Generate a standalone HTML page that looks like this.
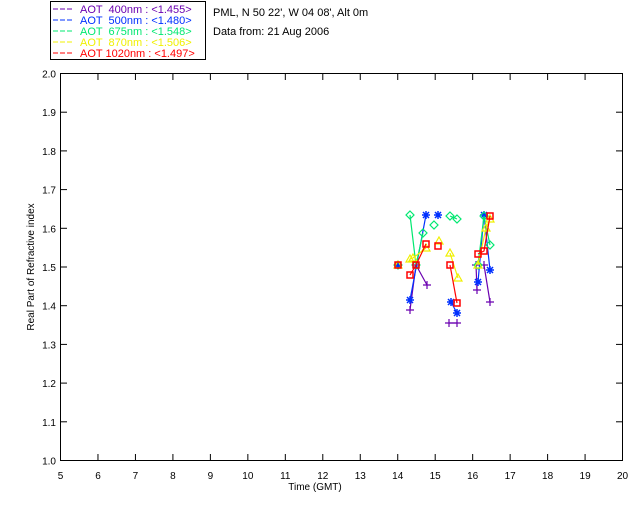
<!DOCTYPE html>
<html><head><meta charset="utf-8"><style>
html,body{margin:0;padding:0;background:#fff;width:640px;height:512px;overflow:hidden}
svg text{font-family:"Liberation Sans",sans-serif;font-size:10px}
</style></head><body>
<svg id="s" width="640" height="512" xmlns="http://www.w3.org/2000/svg">
<rect x="50.5" y="1.5" width="155" height="58" fill="#fff" stroke="#000"/>
<g style="font-size:11px">
<line x1="53" y1="9" x2="74" y2="9" stroke="#6a00b0" stroke-dasharray="5,2"/>
<text x="80" y="13" fill="#6a00b0" xml:space="preserve" style="font-size:11px">AOT  400nm : &lt;1.455&gt;</text>
<line x1="53" y1="20" x2="74" y2="20" stroke="#0030ff" stroke-dasharray="5,2"/>
<text x="80" y="24" fill="#0030ff" xml:space="preserve" style="font-size:11px">AOT  500nm : &lt;1.480&gt;</text>
<line x1="53" y1="31" x2="74" y2="31" stroke="#00e870" stroke-dasharray="5,2"/>
<text x="80" y="35" fill="#00e870" xml:space="preserve" style="font-size:11px">AOT  675nm : &lt;1.548&gt;</text>
<line x1="53" y1="42" x2="74" y2="42" stroke="#f0f000" stroke-dasharray="5,2"/>
<text x="80" y="46" fill="#f0f000" xml:space="preserve" style="font-size:11px">AOT  870nm : &lt;1.506&gt;</text>
<line x1="53" y1="53" x2="74" y2="53" stroke="#ff0000" stroke-dasharray="5,2"/>
<text x="80" y="57" fill="#ff0000" xml:space="preserve" style="font-size:11px">AOT 1020nm : &lt;1.497&gt;</text>
</g>
<text x="213" y="16" style="font-size:11px">PML, N 50 22', W 04 08', Alt 0m</text>
<text x="213" y="35" style="font-size:11px">Data from: 21 Aug 2006</text>
<rect x="60.5" y="73.5" width="562" height="387" fill="none" stroke="#000"/>
<g id="ax" stroke="#000"></g>
<g id="lab" font-size="10"></g>
<text x="315" y="490" text-anchor="middle">Time (GMT)</text>
<text transform="translate(34,267) rotate(-90)" text-anchor="middle">Real Part of Refractive index</text>
<g id="data" fill="none" stroke-width="1.2"></g>
</svg>
<script>
var ns="http://www.w3.org/2000/svg",ax=document.getElementById('ax'),lab=document.getElementById('lab'),dg=document.getElementById('data');
function el(p,t,a,txt){var e=document.createElementNS(ns,t);for(var k in a)e.setAttribute(k,a[k]);if(txt)e.textContent=txt;p.appendChild(e);return e;}
for(var i=5;i<=20;i++){var x=60.5+(i-5)*37.47;
 if(i>5&&i<20){el(ax,'line',{x1:x,y1:460.5,x2:x,y2:454});el(ax,'line',{x1:x,y1:73.5,x2:x,y2:80});}
 el(lab,'text',{x:x,y:479,'text-anchor':'middle'},String(i));}
for(var j=0;j<=10;j++){var y=460.5-j*38.7;
 if(j>0&&j<10){el(ax,'line',{x1:60.5,y1:y,x2:67,y2:y});el(ax,'line',{x1:622.5,y1:y,x2:616,y2:y});}
 el(lab,'text',{x:56,y:y+4,'text-anchor':'end'},(1+j/10).toFixed(1));}
var S={
p:{c:'#6a00b0',m:'+',g:[[[398,265]],[[410,310],[416,265],[427,285]],[[449,323],[457,323]],[[476,265],[477,290]],[[484,265],[490,302]]]},
b:{c:'#0030ff',m:'*',g:[[[398,265]],[[410,300],[426,215]],[[438,215]],[[451,302],[457,313]],[[478,282],[484,215],[490,270]]]},
g:{c:'#00e870',m:'d',g:[[[398,265]],[[410,215],[416,265],[423,233]],[[434,225]],[[450,216],[457,219]],[[478,265],[484,216],[490,245]]]},
y:{c:'#f0f000',m:'t',g:[[[398,265]],[[410,259],[413,258],[426,248]],[[439,241]],[[450,253],[458,278]],[[478,265],[486,228],[490,219]]]},
r:{c:'#ff0000',m:'s',g:[[[398,265]],[[410,275],[416,265],[426,244]],[[438,246]],[[450,265],[457,303]],[[478,254],[484,251],[490,216]]]}};
for(var k in S){var s=S[k];s.g.forEach(function(g){
 if(g.length>1)el(dg,'polyline',{points:g.map(function(p){return p.join(',')}).join(' '),stroke:s.c});
 g.forEach(function(p){var x=p[0],y=p[1];
  if(s.m=='+'){el(dg,'path',{d:'M'+(x-4)+' '+y+'h8M'+x+' '+(y-4)+'v8',stroke:s.c});}
  else if(s.m=='*'){el(dg,'path',{d:'M'+(x-4)+' '+y+'h8M'+x+' '+(y-4)+'v8M'+(x-3)+' '+(y-3)+'l6 6M'+(x-3)+' '+(y+3)+'l6 -6',stroke:s.c,'stroke-width':1.5});}
  else if(s.m=='d'){el(dg,'path',{d:'M'+x+' '+(y-4)+'l4 4l-4 4l-4 -4z',stroke:s.c});}
  else if(s.m=='t'){el(dg,'path',{d:'M'+x+' '+(y-4)+'l4 7h-8z',stroke:s.c});}
  else {el(dg,'rect',{x:x-3,y:y-3,width:6,height:6,stroke:s.c,'stroke-width':1.5});}
 });});}
</script>
</body></html>
